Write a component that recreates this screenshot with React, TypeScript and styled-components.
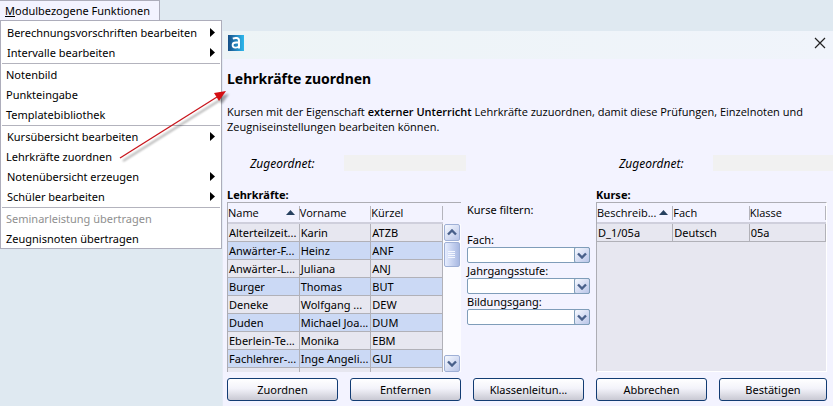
import React from "react";
import styled, { createGlobalStyle, css } from "styled-components";

const GlobalStyle = createGlobalStyle`
  * { box-sizing: border-box; }
  html, body, #root { height: 100%; }
  body {
    margin: 0;
    background: #dfe9f1;
    color: #000;
    font-family: "Noto Sans", "Open Sans", sans-serif;
    font-size: 11px;
    line-height: 15px;
    overflow: hidden;
  }
  button, select { font: inherit; color: inherit; }
`;

const Page = styled.div`
  position: relative;
  display: flex;
  align-items: flex-start;
  min-height: 100%;
`;

const MenuColumn = styled.nav`
  flex: none;
  width: 222px;
`;

const MenuTitle = styled.button`
  display: block;
  width: 160px;
  height: 20px;
  padding: 0 0 0 5px;
  border: 1px solid #adadbb;
  border-width: 1px 1px 0 0;
  background: #f3f3ff;
  text-align: left;
  line-height: 19px;
  white-space: nowrap;
  &::first-letter { text-decoration: underline; }
`;

const MenuList = styled.ul`
  margin: 0;
  padding: 1px 0 0;
  list-style: none;
  background: #fff;
  border: 1px solid #adadbb;
`;

const MenuEntry = styled.li<{ $divided?: boolean }>`
  padding: 0 1px;
  ${(p) =>
    p.$divided &&
    css`
      margin: 0 1px;
      padding: 0 0 1px;
      border-bottom: 1px solid #b3b3bd;
    `}
`;

const MenuButton = styled.button<{ $sub?: boolean }>`
  display: flex;
  align-items: center;
  justify-content: space-between;
  width: 100%;
  height: 20px;
  padding: 0 5px 0 ${(p) => (p.$sub ? 5 : 4)}px;
  border: 0;
  background: none;
  white-space: nowrap;
  svg { flex: none; }
  &:disabled { color: #8f8f8f; }
`;

const Dialog = styled.section`
  flex: 1;
  min-width: 0;
  margin-top: 31px;
  min-height: calc(100vh - 31px);
  background: #f3f3ff;
  border-left: 1px solid #e4ebf4;
`;

const TitleBar = styled.header`
  display: flex;
  align-items: center;
  justify-content: space-between;
  height: 28px;
  padding: 0 7px 4px 5px;
  background: linear-gradient(90deg, #edf4f6, #f0f4fb);
`;

const CloseButton = styled.button`
  display: flex;
  margin: 0;
  padding: 0;
  border: 0;
  background: none;
`;

const Body = styled.div`
  padding: 10px 6px 5px 4px;
`;

const Heading = styled.h1`
  margin: 0;
  font-size: 14px;
  line-height: 20px;
`;

const Description = styled.p`
  margin: 15px 0 0;
  font-family: "Open Sans", "Noto Sans", sans-serif;
  b { font-weight: 600; }
`;

const AssignedRow = styled.div`
  display: grid;
  grid-template-columns: 239fr 237fr;
  gap: 130px;
  margin: 21px -6px 0 0;
`;

const Assigned = styled.div`
  display: flex;
  align-items: center;
  height: 16px;
  padding-left: 23px;
  font-size: 12px;
  font-style: italic;
`;

const AssignedLabel = styled.span`
  flex: none;
  width: 94px;
`;

const AssignedValue = styled.output`
  flex: 1;
  height: 16px;
  background: #f1f1f1;
`;

const Columns = styled.div`
  display: grid;
  grid-template-columns: minmax(0, 234fr) 123px minmax(0, 231fr);
  gap: 6px;
  margin-top: 16px;
`;

const ColumnTitle = styled.h2`
  margin: 0;
  font-size: 11px;
  line-height: 15px;
`;

const Panel = styled.div<{ $filled?: boolean }>`
  display: flex;
  height: 170px;
  overflow: hidden;
  border: solid #adadb4;
  border-width: 1px 0 0 1px;
  ${(p) =>
    p.$filled &&
    css`
      border-right: 1px solid #fff;
      border-bottom: 1px solid #fff;
      background: linear-gradient(#f3f3ff 21px, #e7e7f0 21px);
    `}
`;

const Table = styled.table`
  flex: 1;
  min-width: 0;
  width: 100%;
  height: max-content;
  table-layout: fixed;
  border-collapse: separate;
  border-spacing: 0;
`;

const HeadCell = styled.th`
  height: 21px;
  padding: 0;
  border-bottom: 2px solid #cfcfdc;
  background: #f3f3ff;
  font-family: "Open Sans", "Noto Sans", sans-serif;
  font-weight: 400;
  text-align: left;
`;

const HeadContent = styled.div`
  display: flex;
  align-items: center;
  justify-content: space-between;
  height: 14px;
  padding: 0 4px 0 0;
  border-right: 1px solid #b4b4bc;
  white-space: nowrap;
  svg { flex: none; }
`;

const Row = styled.tr`
  background: #e7e7f0;
  &:nth-child(even) { background: #cbd9f5; }
`;

const Cell = styled.td`
  height: 18px;
  padding: 0 0 0 1px;
  border: solid #b1b1b8;
  border-width: 0 1px 1px 0;
  line-height: 17px;
  white-space: nowrap;
`;

const ScrollTrack = styled.div`
  display: flex;
  flex-direction: column;
  flex: none;
  width: 18px;
  margin-top: 21px;
  padding: 0 1px;
  background: #fcfcff;
`;

const arrowBox = css`
  display: flex;
  align-items: center;
  justify-content: center;
  width: 16px;
  padding: 0;
  border: 1px solid #9fb0d6;
  border-radius: 2px;
  background: linear-gradient(135deg, #f6f9ff, #b9c5e8);
`;

const ScrollButton = styled.button`
  ${arrowBox}
  height: 17px;
`;

const ScrollThumb = styled.div`
  ${arrowBox}
  height: 25px;
  margin: 1px 0 auto;
  background: linear-gradient(90deg, #e6edff, #a9b9e2);
`;

const Filters = styled.form`
  display: flex;
  flex-direction: column;
  padding-top: 15px;
`;

const FilterTitle = styled.div`
  margin-bottom: 15px;
`;

const ComboBox = styled.div`
  display: grid;
  grid-template-columns: 1fr 16px;
  height: 16px;
`;

const ComboSelect = styled.select`
  grid-area: 1 / 1 / 2 / 3;
  appearance: none;
  width: 100%;
  height: 16px;
  padding: 0 18px 0 2px;
  border: 1px solid #7f9db9;
  border-radius: 2px;
  background: #fff;
  line-height: 14px;
`;

const ComboArrow = styled.span`
  grid-area: 1 / 2;
  ${arrowBox}
  height: 16px;
  border-color: #7f9db9;
  pointer-events: none;
`;

const ButtonRow = styled.footer`
  display: grid;
  grid-template-columns: repeat(4, minmax(0, 111fr)) minmax(0, 108fr);
  gap: 12px;
  margin-top: 6px;
`;

const ActionButton = styled.button`
  height: 23px;
  padding: 0 8px;
  border: 1px solid #123c73;
  border-radius: 3px;
  background: linear-gradient(#fff, #f3f3fa 45%, #c9c9d3);
  line-height: 20px;
  white-space: nowrap;
`;

const Pointer = styled.svg`
  position: absolute;
  left: 110px;
  top: 80px;
  pointer-events: none;
`;

const SubmenuIcon = () => (
  <svg width="5" height="9" viewBox="0 0 5 9" aria-hidden="true">
    <path d="M0 0 L5 4.5 L0 9Z" fill="#000" />
  </svg>
);

const SortIcon = () => (
  <svg width="9" height="5" viewBox="0 0 9 5" aria-hidden="true">
    <path d="M4.5 0 L9 5 H0Z" fill="#27415f" />
  </svg>
);

const Chevron = ({ up }: { up?: boolean }) => (
  <svg width="10" height="7" viewBox="0 0 10 7" aria-hidden="true">
    <path d={up ? "M1 5.5 L5 1.5 L9 5.5" : "M1 1.5 L5 5.5 L9 1.5"} fill="none" stroke="#49608a" strokeWidth="2.4" />
  </svg>
);

const AppLogo = () => (
  <svg width="16" height="16" viewBox="0 0 16 16" aria-hidden="true">
    <defs>
      <linearGradient id="logo" x1="0" x2="1">
        <stop offset="0" stopColor="#164f86" />
        <stop offset="0.5" stopColor="#2484bd" />
        <stop offset="1" stopColor="#2eb8ec" />
      </linearGradient>
    </defs>
    <rect width="16" height="16" fill="url(#logo)" />
    <path d="M4.8 3.6 C7.5 2.4 11 2.5 11 5.8 V13.5" fill="none" stroke="#fff" strokeWidth="2" />
    <path d="M11 7.5 H8 C5.8 7.5 4.6 8.3 4.6 10 C4.6 13.3 9.5 13.3 11 11" fill="none" stroke="#fff" strokeWidth="1.8" />
  </svg>
);

interface MenuItem {
  label: string;
  sub?: boolean;
  divided?: boolean;
  disabled?: boolean;
}

const menuItems: MenuItem[] = [
  { label: "Berechnungsvorschriften bearbeiten", sub: true },
  { label: "Intervalle bearbeiten", sub: true, divided: true },
  { label: "Notenbild" },
  { label: "Punkteingabe" },
  { label: "Templatebibliothek", divided: true },
  { label: "Kursübersicht bearbeiten", sub: true },
  { label: "Lehrkräfte zuordnen" },
  { label: "Notenübersicht erzeugen", sub: true },
  { label: "Schüler bearbeiten", sub: true, divided: true },
  { label: "Seminarleistung übertragen", disabled: true },
  { label: "Zeugnisnoten übertragen" },
];

const teachers = [
  ["Alterteilzeit...", "Karin", "ATZB"],
  ["Anwärter-F...", "Heinz", "ANF"],
  ["Anwärter-L...", "Juliana", "ANJ"],
  ["Burger", "Thomas", "BUT"],
  ["Deneke", "Wolfgang ...", "DEW"],
  ["Duden", "Michael Joa...", "DUM"],
  ["Eberlein-Te...", "Monika", "EBM"],
  ["Fachlehrer-...", "Inge Angeli...", "GUI"],
  ["", "", ""],
];

const courses = [["D_1/05a", "Deutsch", "05a"]];

const DataTable = ({ heads, rows, label }: { heads: string[]; rows: string[][]; label: string }) => (
  <Table aria-label={label}>
    <thead>
      <tr>
        {heads.map((head, i) => (
          <HeadCell key={head} scope="col">
            <HeadContent>
              <span>{head}</span>
              {i === 0 && <SortIcon />}
            </HeadContent>
          </HeadCell>
        ))}
      </tr>
    </thead>
    <tbody>
      {rows.map((row, r) => (
        <Row key={r}>
          {row.map((value, c) => (
            <Cell key={c}>{value}</Cell>
          ))}
        </Row>
      ))}
    </tbody>
  </Table>
);

const AssignedField = ({ id }: { id: string }) => (
  <Assigned>
    <AssignedLabel id={id}>Zugeordnet:</AssignedLabel>
    <AssignedValue aria-labelledby={id} />
  </Assigned>
);

export default function App() {
  return (
    <Page>
      <GlobalStyle />
      <MenuColumn>
        <MenuTitle type="button">Modulbezogene Funktionen</MenuTitle>
        <MenuList>
          {menuItems.map((item) => (
            <MenuEntry key={item.label} $divided={item.divided}>
              <MenuButton type="button" disabled={item.disabled} $sub={item.sub}>
                {item.label}
                {item.sub && <SubmenuIcon />}
              </MenuButton>
            </MenuEntry>
          ))}
        </MenuList>
      </MenuColumn>

      <Dialog role="dialog" aria-labelledby="dialog-title">
        <TitleBar>
          <AppLogo />
          <CloseButton type="button" aria-label="Schließen">
            <svg width="12" height="12" viewBox="0 0 12 12" aria-hidden="true">
              <path d="M1 1 L11 11 M11 1 L1 11" stroke="#222" strokeWidth="1.2" />
            </svg>
          </CloseButton>
        </TitleBar>
        <Body>
          <Heading id="dialog-title">Lehrkräfte zuordnen</Heading>
          <Description>
            Kursen mit der Eigenschaft <b>externer Unterricht</b> Lehrkräfte zuzuordnen, damit diese Prüfungen,
            Einzelnoten und
            <br />
            Zeugniseinstellungen bearbeiten können.
          </Description>
          <AssignedRow>
            <AssignedField id="assigned-teachers" />
            <AssignedField id="assigned-courses" />
          </AssignedRow>
          <Columns>
            <div>
              <ColumnTitle>Lehrkräfte:</ColumnTitle>
              <Panel>
                <DataTable label="Lehrkräfte" heads={["Name", "Vorname", "Kürzel"]} rows={teachers} />
                <ScrollTrack>
                  <ScrollButton type="button" aria-label="Nach oben">
                    <Chevron up />
                  </ScrollButton>
                  <ScrollThumb>
                    <svg width="8" height="8" viewBox="0 0 8 8" aria-hidden="true">
                      <path d="M0 0.5 H7 M0 2.5 H7 M0 4.5 H7 M0 6.5 H7" stroke="#f4f7ff" />
                    </svg>
                  </ScrollThumb>
                  <ScrollButton type="button" aria-label="Nach unten">
                    <Chevron />
                  </ScrollButton>
                </ScrollTrack>
              </Panel>
            </div>
            <Filters>
              <FilterTitle>Kurse filtern:</FilterTitle>
              {["Fach", "Jahrgangsstufe", "Bildungsgang"].map((name) => (
                <React.Fragment key={name}>
                  <label htmlFor={name}>{name}:</label>
                  <ComboBox>
                    <ComboSelect id={name} />
                    <ComboArrow>
                      <Chevron />
                    </ComboArrow>
                  </ComboBox>
                </React.Fragment>
              ))}
            </Filters>
            <div>
              <ColumnTitle>Kurse:</ColumnTitle>
              <Panel $filled>
                <DataTable label="Kurse" heads={["Beschreib...", "Fach", "Klasse"]} rows={courses} />
              </Panel>
            </div>
          </Columns>
          <ButtonRow>
            {["Zuordnen", "Entfernen", "Klassenleitun...", "Abbrechen", "Bestätigen"].map((text) => (
              <ActionButton key={text} type="button">
                {text}
              </ActionButton>
            ))}
          </ButtonRow>
        </Body>
      </Dialog>

      <Pointer width="124" height="90" viewBox="110 80 124 90" aria-hidden="true">
        <defs>
          <filter id="soft" x="-10%" y="-10%" width="120%" height="120%">
            <feGaussianBlur stdDeviation="1" />
          </filter>
        </defs>
        <g transform="translate(3 3)" opacity="0.35" filter="url(#soft)">
          <path d="M120 158 L217 97" stroke="#000" strokeWidth="1.5" />
          <path d="M226 91 L214 93 L219 101Z" fill="#000" />
        </g>
        <path d="M120 158 L217 97" stroke="#c8141b" strokeWidth="1.3" />
        <path d="M226 91 L214 93 L219 101Z" fill="#d40d12" />
      </Pointer>
    </Page>
  );
}
